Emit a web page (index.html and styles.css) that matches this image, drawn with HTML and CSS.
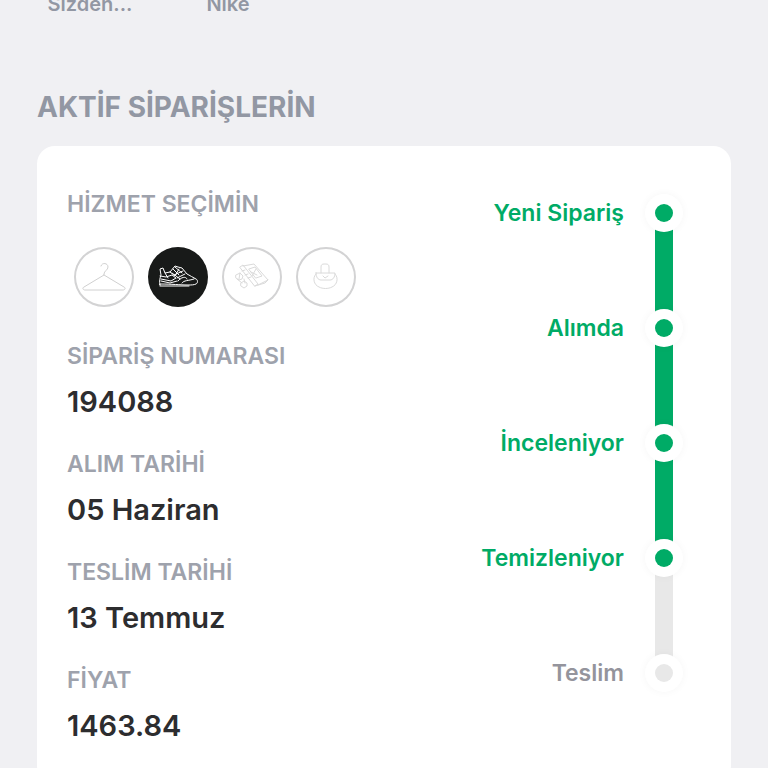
FILE: index.html
```html
<!DOCTYPE html>
<html lang="tr">
<head>
  <meta charset="UTF-8"/>
  <meta name="viewport" content="width=device-width, initial-scale=1.0"/>
  <title>Aktif Siparişlerin</title>
  <link rel="stylesheet" href="styles.css">
</head>
<body>
  <!-- Stories -->
  <nav class="stories">
    <a class="story" href="#sizden">Sizden...</a>
    <a class="story" href="#nike">Nike</a>
  </nav>

  <!-- Active orders -->
  <main class="orders">
    <h1>AKTİF SİPARİŞLERİN</h1>

    <article class="card">
      <div class="details">
        <fieldset class="services">
          <legend class="label">HİZMET SEÇİMİN</legend>
          <div class="service-list">
            <label class="service">
              <input type="radio" name="service" value="dry" aria-label="Kuru temizleme"/>
              <svg viewBox="0 0 60 60">
                <path d="M27 19c1-4 7-3 7 1 0 3-4 4-4 7v1L10 40c-2 1-1 3 1 3h38c2 0 3-2 1-3L30 28"/>
              </svg>
            </label>
            <label class="service">
              <input type="radio" name="service" value="shoe" aria-label="Ayakkabı" checked/>
              <svg viewBox="0 0 60 60">
                <path d="M12 38c-1-4 0-7 1-10l-1-6 3-1 2 5 5-1 5-6 3 1 4 1 5 6c3 2 6 3 9 5 2 1 2 4 0 5-2 1-5 1-8 1-8 0-16-1-28-1zM12 39h29"/>
                <path d="M12 29l6 1 6-2 4 3-5 3-10-2M22 25l5 4 4-7M25 22l6 6M27 20l7 6M26 28l9-4M29 31l8-4M24 26l8 6M30 34c3-4 8-5 9-2M34 36c2-3 6-2 12-4M17 26l3 5M13 34l9 2 7-2"/>
              </svg>
            </label>
            <label class="service">
              <input type="radio" name="service" value="repair" aria-label="Tamir"/>
              <svg viewBox="0 0 60 60" class="faint">
                <path d="M18 20l3-2 15 19-3 2zM21 19l11-2 14 16-10 5M33 39l10-3 3-3M27 22l6-2 7 9-6 2zM29 25l6 3M30 29l4-7M20 24l3-1M23 28l3-1M26 31l3-1"/>
                <path d="M14 28l4-2 3 3-1 3-3 1-3-2zM18 26l-1 6M19 36l3-2 3 2v3l-3 2-3-2zM15 32l5 4M22 32l1 4"/>
              </svg>
            </label>
            <label class="service">
              <input type="radio" name="service" value="bag" aria-label="Çanta"/>
              <svg viewBox="0 0 60 60" class="faint">
                <path d="M25 26v-6c0-2 1-3 3-3h2c2 0 3 1 3 3v6M20 26h19c0 4-2 7-5 7h-9c-3 0-5-3-5-7zM20 27c-4 4-2 11 3 13 4 2 9 2 13 0 5-2 7-9 3-13M27 29l2 2 3-2"/>
              </svg>
            </label>
          </div>
        </fieldset>

        <dl class="info">
          <div>
            <dt class="label">SİPARİŞ NUMARASI</dt>
            <dd>194088</dd>
          </div>
          <div>
            <dt class="label">ALIM TARİHİ</dt>
            <dd>05 Haziran</dd>
          </div>
          <div>
            <dt class="label">TESLİM TARİHİ</dt>
            <dd>13 Temmuz</dd>
          </div>
          <div>
            <dt class="label">FİYAT</dt>
            <dd>1463.84</dd>
          </div>
        </dl>
      </div>

      <!-- Order status -->
      <ol class="steps">
        <li class="step done">
          <span class="step-name">Yeni Sipariş</span>
          <span class="track"><i class="dot"></i><i class="line"></i></span>
        </li>
        <li class="step done">
          <span class="step-name">Alımda</span>
          <span class="track"><i class="dot"></i><i class="line"></i></span>
        </li>
        <li class="step done">
          <span class="step-name">İnceleniyor</span>
          <span class="track"><i class="dot"></i><i class="line"></i></span>
        </li>
        <li class="step done current">
          <span class="step-name">Temizleniyor</span>
          <span class="track"><i class="dot"></i><i class="line"></i></span>
        </li>
        <li class="step">
          <span class="step-name">Teslim</span>
          <span class="track"><i class="dot"></i></span>
        </li>
      </ol>
    </article>
  </main>
</body>
</html>
```
FILE: styles.css
```css
:root {
  --bg: #f0f0f3;
  --muted: #9297a3;
  --label: #9ea2ac;
  --text: #2d2d2f;
  --green: #00ab66;
  --line: #e8e8e8;
}
* { box-sizing: border-box; margin: 0; padding: 0; }
body {
  font-family: Inter, "Liberation Sans", sans-serif;
  font-weight: 600;
  background: var(--bg);
  color: var(--text);
}

/* Stories */
.stories {
  display: flex;
  align-items: flex-end;
  height: 16px;
  padding: 0 21px;
  overflow: hidden;
}
.story {
  flex: 0 0 138px;
  font-size: 20px;
  line-height: 24px;
  text-align: center;
  text-decoration: none;
  color: var(--muted);
}

/* Orders */
.orders { padding: 74px 37px 40px; }
h1 {
  margin-bottom: 22px;
  font-size: 28px;
  line-height: 34px;
  font-weight: 700;
  color: var(--muted);
}
.card {
  display: flex;
  justify-content: space-between;
  padding: 44px 48px 40px 30px;
  background: #fff;
  border-radius: 18px;
}
.label {
  font-size: 23px;
  line-height: 28px;
  color: var(--label);
}

/* Services */
.services { border: 0; }
.service-list {
  display: flex;
  gap: 14px;
  padding: 29px 7px 0;
}
.service {
  position: relative;
  width: 60px;
  height: 60px;
  border-radius: 50%;
  box-shadow: inset 0 0 0 2px #d3d3d4;
  cursor: pointer;
}
.service input {
  position: absolute;
  inset: 0;
  opacity: 0;
}
.service svg {
  display: block;
  fill: none;
  stroke: #d0d0d0;
  stroke-linecap: round;
  stroke-linejoin: round;
}
.service .faint { stroke: #dadada; }
.service:has(:checked) {
  background: #181a19;
  box-shadow: none;
}
.service:has(:checked) svg { stroke: #fff; }

/* Order info */
.info {
  display: flex;
  flex-direction: column;
  gap: 30px;
  margin-top: 35px;
}
.info dd {
  margin-top: 14px;
  font-size: 29px;
  line-height: 36px;
}

/* Steps */
.steps { list-style: none; padding-top: 4px; }
.step {
  display: flex;
  justify-content: flex-end;
  gap: 21px;
  color: #94949c;
}
.step.done { color: var(--green); }
.step-name { font-size: 23px; line-height: 38px; }
.track {
  display: flex;
  flex-direction: column;
  align-items: center;
}
.dot {
  position: relative;
  z-index: 1;
  width: 38px;
  height: 38px;
  padding: 10px;
  border-radius: 50%;
  background: #fff;
  box-shadow: 0 0 8px rgba(0,0,0,.04);
}
.dot::before {
  content: '';
  display: block;
  height: 18px;
  border-radius: 50%;
  background: var(--line);
}
.line {
  width: 18px;
  height: 83px;
  margin: -3px 0;
  background: var(--line);
}
.done .dot::before,
.done .line { background: var(--green); }
.current .line { background: var(--line); }
```
